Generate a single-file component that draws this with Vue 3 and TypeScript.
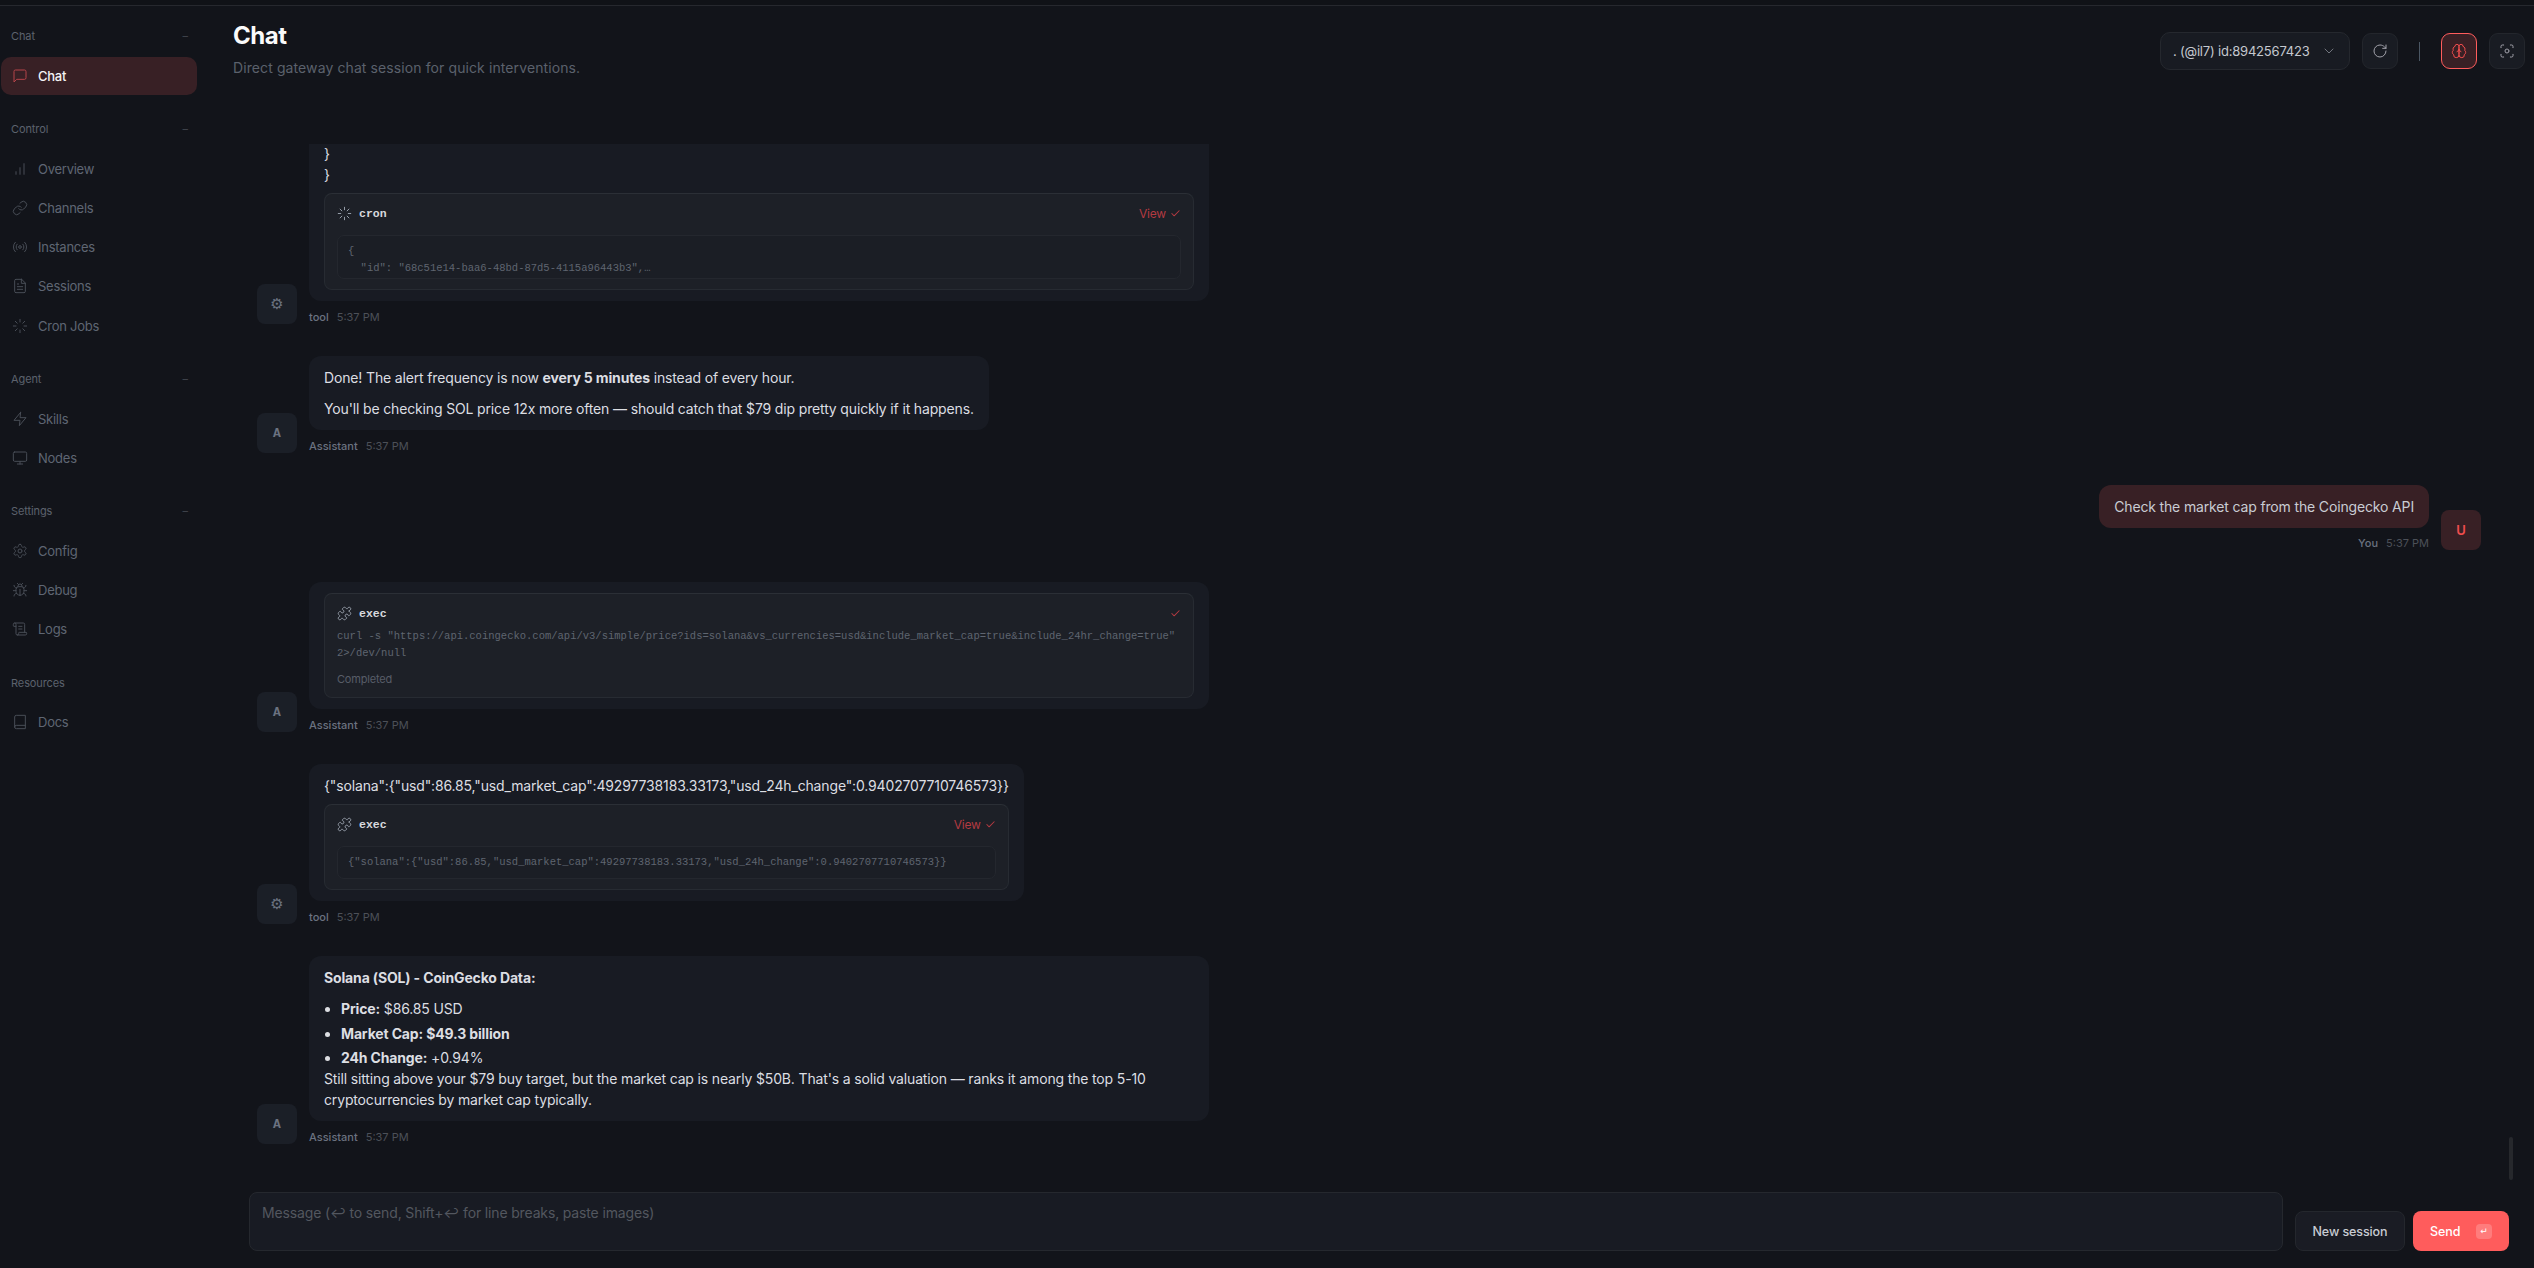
<script setup lang="ts">
import { h } from 'vue'

const icons: Record<string, string[]> = {
  chat: ['M21 15a2 2 0 0 1-2 2H7l-4 4V5a2 2 0 0 1 2-2h14a2 2 0 0 1 2 2z'],
  overview: ['M12 20V10', 'M18 20V4', 'M6 20v-4'],
  channels: [
    'M10 13a5 5 0 0 0 7.54.54l3-3a5 5 0 0 0-7.07-7.07l-1.72 1.71',
    'M14 11a5 5 0 0 0-7.54-.54l-3 3a5 5 0 0 0 7.07 7.07l1.71-1.71',
  ],
  instances: [
    'M14 12a2 2 0 1 1-4 0 2 2 0 1 1 4 0',
    'M4.93 19.07a10 10 0 0 1 0-14.14',
    'M7.76 16.24a6 6 0 0 1 0-8.49',
    'M16.24 7.76a6 6 0 0 1 0 8.49',
    'M19.07 4.93a10 10 0 0 1 0 14.14',
  ],
  sessions: [
    'M14.5 2H6a2 2 0 0 0-2 2v16a2 2 0 0 0 2 2h12a2 2 0 0 0 2-2V7.5L14.5 2z',
    'M14 2v6h6',
    'M16 13H8',
    'M16 17H8',
    'M10 9H8',
  ],
  cron: [
    'M12 2v4',
    'm16.2 7.8 2.9-2.9',
    'M18 12h4',
    'm16.2 16.2 2.9 2.9',
    'M12 18v4',
    'm4.9 19.1 2.9-2.9',
    'M2 12h4',
    'm4.9 4.9 2.9 2.9',
  ],
  skills: ['M13 2 3 14h9l-1 8 10-12h-9l1-8z'],
  nodes: [
    'M4 3h16a2 2 0 0 1 2 2v10a2 2 0 0 1-2 2H4a2 2 0 0 1-2-2V5a2 2 0 0 1 2-2z',
    'M8 21h8',
    'M12 17v4',
  ],
  config: [
    'M12.22 2h-.44a2 2 0 0 0-2 2v.18a2 2 0 0 1-1 1.73l-.43.25a2 2 0 0 1-2 0l-.15-.08a2 2 0 0 0-2.73.73l-.22.38a2 2 0 0 0 .73 2.73l.15.1a2 2 0 0 1 1 1.72v.51a2 2 0 0 1-1 1.74l-.15.09a2 2 0 0 0-.73 2.73l.22.38a2 2 0 0 0 2.73.73l.15-.08a2 2 0 0 1 2 0l.43.25a2 2 0 0 1 1 1.73V20a2 2 0 0 0 2 2h.44a2 2 0 0 0 2-2v-.18a2 2 0 0 1 1-1.73l.43-.25a2 2 0 0 1 2 0l.15.08a2 2 0 0 0 2.73-.73l.22-.39a2 2 0 0 0-.73-2.73l-.15-.08a2 2 0 0 1-1-1.74v-.5a2 2 0 0 1 1-1.74l.15-.09a2 2 0 0 0 .73-2.73l-.22-.38a2 2 0 0 0-2.73-.73l-.15.08a2 2 0 0 1-2 0l-.43-.25a2 2 0 0 1-1-1.73V4a2 2 0 0 0-2-2z',
    'M15 12a3 3 0 1 1-6 0 3 3 0 1 1 6 0',
  ],
  debug: [
    'm8 2 1.88 1.88',
    'M14.12 3.88 16 2',
    'M9 7.13v-1a3.003 3.003 0 1 1 6 0v1',
    'M12 20c-3.3 0-6-2.7-6-6v-3a4 4 0 0 1 4-4h4a4 4 0 0 1 4 4v3c0 3.3-2.7 6-6 6',
    'M12 20v-9',
    'M6.53 9C4.6 8.8 3 7.1 3 5',
    'M6 13H2',
    'M3 21c0-2.1 1.7-3.9 3.8-4',
    'M20.97 5c0 2.1-1.6 3.8-3.5 4',
    'M22 13h-4',
    'M17.2 17c2.1.1 3.8 1.9 3.8 4',
  ],
  logs: [
    'M15 12h-5',
    'M15 8h-5',
    'M19 17V5a2 2 0 0 0-2-2H4',
    'M8 21h12a2 2 0 0 0 2-2v-1a1 1 0 0 0-1-1H11a1 1 0 0 0-1 1v1a2 2 0 1 1-4 0V5a2 2 0 1 0-4 0v2a1 1 0 0 0 1 1h3',
  ],
  docs: ['M4 19.5v-15A2.5 2.5 0 0 1 6.5 2H20v20H6.5a2.5 2.5 0 0 1 0-5H20'],
  exec: [
    'M19.439 7.85c-.049.322.059.648.289.878l1.568 1.568c.47.47.706 1.087.706 1.704s-.235 1.233-.706 1.704l-1.611 1.611a.98.98 0 0 1-.837.276c-.47-.07-.802-.48-.968-.925a2.501 2.501 0 1 0-3.214 3.214c.446.166.855.497.925.968a.979.979 0 0 1-.276.837l-1.61 1.61a2.404 2.404 0 0 1-1.705.707 2.402 2.402 0 0 1-1.704-.706l-1.568-1.568a1.026 1.026 0 0 0-.877-.29c-.493.074-.84.504-1.02.968a2.5 2.5 0 1 1-3.237-3.237c.464-.18.894-.527.967-1.02a1.026 1.026 0 0 0-.289-.877l-1.568-1.568A2.402 2.402 0 0 1 1.998 12c0-.617.236-1.234.706-1.704L4.23 8.77c.24-.24.581-.353.917-.303.515.077.877.528 1.073 1.01a2.5 2.5 0 1 0 3.259-3.259c-.482-.196-.933-.558-1.01-1.073-.05-.336.062-.676.303-.917l1.525-1.525A2.402 2.402 0 0 1 12 1.998c.617 0 1.234.236 1.704.706l1.568 1.568c.23.23.556.338.877.29.493-.074.84-.504 1.02-.968a2.5 2.5 0 1 1 3.237 3.237c-.464.18-.894.527-.967 1.02Z',
  ],
  refresh: ['M21 12a9 9 0 1 1-9-9c2.52 0 4.93 1 6.74 2.74L21 8', 'M21 3v5h-5'],
  brain: [
    'M12 5a3 3 0 1 0-5.997.125 4 4 0 0 0-2.526 5.77 4 4 0 0 0 .556 6.588A4 4 0 1 0 12 18Z',
    'M12 5a3 3 0 1 1 5.997.125 4 4 0 0 1 2.526 5.77 4 4 0 0 1-.556 6.588A4 4 0 1 1 12 18Z',
    'M15 13a4.5 4.5 0 0 1-3-4 4.5 4.5 0 0 1-3 4',
  ],
  focus: [
    'M3 7V5a2 2 0 0 1 2-2h2',
    'M17 3h2a2 2 0 0 1 2 2v2',
    'M21 17v2a2 2 0 0 1-2 2h-2',
    'M7 21H5a2 2 0 0 1-2-2v-2',
    'M15 12a3 3 0 1 1-6 0 3 3 0 1 1 6 0',
  ],
  chevron: ['m6 9 6 6 6-6'],
  check: ['M20 6 9 17l-5-5'],
}

const Icon = (props: { name: string }) =>
  h(
    'svg',
    {
      viewBox: '0 0 24 24',
      fill: 'none',
      stroke: 'currentColor',
      'stroke-width': 1.5,
      'stroke-linecap': 'round',
      'stroke-linejoin': 'round',
    },
    icons[props.name].map((d) => h('path', { d })),
  )

const navGroups = [
  { label: 'Chat', items: [{ name: 'Chat', icon: 'chat', active: true }] },
  {
    label: 'Control',
    items: [
      { name: 'Overview', icon: 'overview' },
      { name: 'Channels', icon: 'channels' },
      { name: 'Instances', icon: 'instances' },
      { name: 'Sessions', icon: 'sessions' },
      { name: 'Cron Jobs', icon: 'cron' },
    ],
  },
  {
    label: 'Agent',
    items: [
      { name: 'Skills', icon: 'skills' },
      { name: 'Nodes', icon: 'nodes' },
    ],
  },
  {
    label: 'Settings',
    items: [
      { name: 'Config', icon: 'config' },
      { name: 'Debug', icon: 'debug' },
      { name: 'Logs', icon: 'logs' },
    ],
  },
  { label: 'Resources', plain: true, items: [{ name: 'Docs', icon: 'docs' }] },
]

const curl =
  'curl -s "https://api.coingecko.com/api/v3/simple/price?ids=solana&vs_currencies=usd&include_market_cap=true&include_24hr_change=true" 2>/dev/null'
const solanaJson =
  '{"solana":{"usd":86.85,"usd_market_cap":49297738183.33173,"usd_24h_change":0.9402707710746573}}'
</script>

<template>
  <div class="shell">
    <div class="topbar"></div>
    <div class="body">
      <aside class="sidebar">
        <section v-for="group in navGroups" :key="group.label" class="nav-group">
          <div class="nav-label">
            <span>{{ group.label }}</span>
            <span v-if="!group.plain" class="nav-dash">–</span>
          </div>
          <a
            v-for="item in group.items"
            :key="item.name"
            class="nav-item"
            :class="{ 'nav-item--active': 'active' in item }"
          >
            <Icon :name="item.icon" class="nav-icon" />
            <span>{{ item.name }}</span>
          </a>
        </section>
      </aside>

      <main class="main">
        <header class="page-header">
          <div>
            <h1>Chat</h1>
            <p>Direct gateway chat session for quick interventions.</p>
          </div>
          <div class="actions">
            <div class="session-select">
              <span>. (@il7) id:8942567423</span>
              <Icon name="chevron" class="select-chevron" />
            </div>
            <button class="icon-btn"><Icon name="refresh" /></button>
            <span class="divider"></span>
            <button class="icon-btn icon-btn--on"><Icon name="brain" /></button>
            <button class="icon-btn"><Icon name="focus" /></button>
          </div>
        </header>

        <div class="thread-wrap">
          <div class="thread">
            <div class="msg">
              <div class="avatar avatar--tool">⚙</div>
              <div class="msg-body">
                <div class="bubble bubble--wide bubble--clipped">
                  <div>}</div>
                  <div>}</div>
                  <div class="tool-card">
                    <div class="tool-head">
                      <span class="tool-name"><Icon name="cron" />cron</span>
                      <span class="tool-view">View <Icon name="check" /></span>
                    </div>
                    <pre class="tool-preview tool-preview--cut">{
  "id": "68c51e14-baa6-48bd-87d5-4115a96443b3",…</pre>
                  </div>
                </div>
                <div class="msg-meta"><b>tool</b><span>5:37 PM</span></div>
              </div>
            </div>

            <div class="msg">
              <div class="avatar">A</div>
              <div class="msg-body">
                <div class="bubble">
                  <p>Done! The alert frequency is now <strong>every 5 minutes</strong> instead of every hour.</p>
                  <p>You'll be checking SOL price 12x more often — should catch that $79 dip pretty quickly if it happens.</p>
                </div>
                <div class="msg-meta"><b>Assistant</b><span>5:37 PM</span></div>
              </div>
            </div>

            <div class="msg msg--user">
              <div class="msg-body">
                <div class="bubble bubble--user">Check the market cap from the Coingecko API</div>
                <div class="msg-meta"><b>You</b><span>5:37 PM</span></div>
              </div>
              <div class="avatar avatar--user">U</div>
            </div>

            <div class="msg">
              <div class="avatar">A</div>
              <div class="msg-body">
                <div class="bubble bubble--wide">
                  <div class="tool-card tool-card--flush">
                    <div class="tool-head">
                      <span class="tool-name"><Icon name="exec" />exec</span>
                      <span class="tool-view"><Icon name="check" /></span>
                    </div>
                    <div class="tool-detail">{{ curl }}</div>
                    <div class="tool-status">Completed</div>
                  </div>
                </div>
                <div class="msg-meta"><b>Assistant</b><span>5:37 PM</span></div>
              </div>
            </div>

            <div class="msg">
              <div class="avatar avatar--tool">⚙</div>
              <div class="msg-body">
                <div class="bubble">
                  <div>{{ solanaJson }}</div>
                  <div class="tool-card">
                    <div class="tool-head">
                      <span class="tool-name"><Icon name="exec" />exec</span>
                      <span class="tool-view">View <Icon name="check" /></span>
                    </div>
                    <pre class="tool-preview">{{ solanaJson }}</pre>
                  </div>
                </div>
                <div class="msg-meta"><b>tool</b><span>5:37 PM</span></div>
              </div>
            </div>

            <div class="msg">
              <div class="avatar">A</div>
              <div class="msg-body">
                <div class="bubble bubble--wide">
                  <p><strong>Solana (SOL) - CoinGecko Data:</strong></p>
                  <ul>
                    <li><strong>Price:</strong> $86.85 USD</li>
                    <li><strong>Market Cap: $49.3 billion</strong></li>
                    <li><strong>24h Change:</strong> +0.94%</li>
                  </ul>
                  <div>Still sitting above your $79 buy target, but the market cap is nearly $50B. That's a solid valuation — ranks it among the top 5-10 cryptocurrencies by market cap typically.</div>
                </div>
                <div class="msg-meta"><b>Assistant</b><span>5:37 PM</span></div>
              </div>
            </div>
          </div>
          <div class="scroll-thumb"></div>
        </div>

        <div class="composer">
          <div class="composer-input">Message (↩ to send, Shift+↩ for line breaks, paste images)</div>
          <button class="btn">New session</button>
          <button class="btn btn--send">Send <kbd>↵</kbd></button>
        </div>
      </main>
    </div>
  </div>
</template>

<style>
body {
  background: #12141a;
}
</style>

<style scoped>
.shell {
  width: 2534px;
  height: 1268px;
  display: flex;
  flex-direction: column;
  background: #12141a;
  color: #e4e4e7;
  font-family: Inter, "Noto Sans", sans-serif;
  font-size: 13px;
  overflow: hidden;
}

.topbar {
  height: 5px;
  flex: none;
  border-bottom: 1px solid #26282e;
  background: #101217;
}

.body {
  flex: 1;
  min-height: 0;
  display: flex;
}

.sidebar {
  width: 233px;
  flex: none;
  padding: 22px 36px 0 1px;
  box-sizing: border-box;
}

.nav-group {
  display: flex;
  flex-direction: column;
  gap: 1.25px;
  margin-bottom: 26.5px;
}

.nav-label {
  height: 16px;
  margin-bottom: 11.25px;
  padding: 0 9px 0 10px;
  display: flex;
  justify-content: space-between;
  align-items: center;
  font-size: 11px;
  letter-spacing: -0.1px;
  color: #5c626d;
}

.nav-dash {
  color: #3f434b;
}

.nav-item {
  height: 38px;
  padding-left: 11px;
  display: flex;
  align-items: center;
  gap: 10px;
  border-radius: 10px;
  color: #5f6673;
  letter-spacing: -0.25px;
}

.nav-icon {
  width: 16px;
  height: 16px;
  color: #484d56;
}

.nav-item--active {
  background: #382025;
  color: #f4f4f5;
  font-weight: 500;
}

.nav-item--active .nav-icon {
  color: #b5444a;
}

.main {
  flex: 1;
  min-width: 0;
  display: flex;
  flex-direction: column;
  padding-right: 9px;
}

.page-header {
  height: 138px;
  flex: none;
  display: flex;
  justify-content: space-between;
  align-items: flex-start;
  padding-top: 15px;
  box-sizing: border-box;
}

.page-header h1 {
  margin: 0 0 8px;
  font-size: 24px;
  line-height: 30px;
  font-weight: 700;
  letter-spacing: -0.5px;
  color: #fafafa;
}

.page-header p {
  margin: 0;
  font-size: 14px;
  line-height: 18px;
  letter-spacing: 0.1px;
  color: #5b616c;
}

.actions {
  display: flex;
  align-items: center;
  margin-top: 11px;
}

.session-select {
  width: 190px;
  height: 38px;
  box-sizing: border-box;
  padding: 0 12px 0 12px;
  display: flex;
  justify-content: space-between;
  align-items: center;
  border: 1px solid #25282e;
  border-radius: 10px;
  background: #181b22;
  color: #c4c8cf;
  letter-spacing: -0.2px;
  margin-right: 12px;
}

.select-chevron {
  width: 16px;
  height: 16px;
  color: #71757d;
}

.icon-btn {
  width: 36px;
  height: 36px;
  padding: 0;
  display: flex;
  align-items: center;
  justify-content: center;
  border: 1px solid #23262c;
  border-radius: 9px;
  background: #191c23;
  color: #a1a1aa;
}

.icon-btn svg {
  width: 16px;
  height: 16px;
}

.icon-btn--on {
  border-color: #ff5c5c;
  background: #382025;
  color: #ef4d4d;
  margin-right: 12px;
}

.divider {
  width: 1px;
  height: 19px;
  margin: 0 21px;
  background: #4a5663;
}

.thread-wrap {
  position: relative;
  flex: 1;
  min-height: 0;
  margin: 0 16px;
}

.thread {
  height: 100%;
  box-sizing: border-box;
  padding: 0 28px 36px 8px;
  display: flex;
  flex-direction: column;
  justify-content: flex-end;
  gap: 32px;
  overflow: hidden;
}

.msg {
  display: flex;
  align-items: flex-end;
  gap: 12px;
  flex: none;
}

.msg--user {
  justify-content: flex-end;
}

.msg--user .msg-body {
  align-items: flex-end;
}

.msg--user .msg-meta {
  margin-top: 7px;
}

.msg-body {
  display: flex;
  flex-direction: column;
  max-width: 900px;
}

.avatar {
  width: 40px;
  height: 40px;
  flex: none;
  display: flex;
  align-items: center;
  justify-content: center;
  border-radius: 8px;
  background: #1b1f27;
  color: #6b7280;
  font-weight: 600;
  font-size: 13px;
  font-family: "Liberation Mono", monospace;
}

.avatar--tool {
  font-family: "DejaVu Sans", sans-serif;
  font-size: 15px;
}

.avatar--user {
  background: #382025;
  color: #ef4d4d;
  font-family: Inter, sans-serif;
}

.bubble {
  padding: 11px 15px;
  border-radius: 12px;
  background: #181b23;
  font-size: 14px;
  line-height: 21px;
  letter-spacing: -0.15px;
  color: #dcdee2;
}

.bubble--wide {
  width: 900px;
  box-sizing: border-box;
}

.bubble--clipped {
  padding-top: 30px;
}

.bubble--user {
  background: #382025;
  color: #c9ccd3;
}

.bubble p {
  margin: 0 0 10px;
}

.bubble p:last-child {
  margin-bottom: 0;
}

.bubble ul {
  margin: 0;
  padding-left: 17px;
}

.bubble li + li {
  margin-top: 3.5px;
}

.bubble strong {
  font-weight: 700;
}

.msg-meta {
  margin-top: 8px;
  height: 15px;
  display: flex;
  align-items: center;
  gap: 8px;
  font-size: 11px;
  color: #4c5058;
}

.msg-meta b {
  font-weight: 500;
  color: #6b7280;
}

.tool-card {
  margin-top: 8px;
  padding: 10px 12px 10px;
  border: 1px solid #272b32;
  border-top-color: #2b2f36;
  border-radius: 8px;
  background: #1d2027;
}

.tool-card--flush {
  margin-top: 0;
}

.tool-head {
  height: 18px;
  display: flex;
  justify-content: space-between;
  align-items: center;
  font-size: 12px;
}

.tool-name {
  display: flex;
  align-items: center;
  gap: 7px;
  font-weight: 600;
  color: #d8d9dd;
  letter-spacing: 0;
  font-family: "Liberation Mono", Inter, monospace;
  font-size: 11.5px;
}

.tool-name svg {
  width: 15px;
  height: 15px;
  color: #9ca3af;
}

.tool-view {
  display: flex;
  align-items: center;
  gap: 4px;
  font-size: 12px;
  letter-spacing: -0.2px;
  color: #b33a41;
}

.tool-view svg {
  width: 11px;
  height: 11px;
  stroke-width: 2.2;
}

.tool-preview {
  margin: 13px 0 0;
  padding: 7px 10px;
  max-height: 44px;
  overflow: hidden;
  box-sizing: border-box;
  border: 1px solid #24272e;
  border-radius: 7px;
  background: #1b1e25;
  font-family: "Liberation Mono", monospace;
  font-size: 10.5px;
  line-height: 17px;
  letter-spacing: 0;
  color: #5f6570;
}

.tool-preview--cut {
  height: 44px;
}

.tool-detail {
  margin-top: 6px;
  font-family: "Liberation Mono", monospace;
  font-size: 10.5px;
  line-height: 17px;
  letter-spacing: 0;
  color: #5f6570;
}

.tool-status {
  margin-top: 9px;
  font-size: 11px;
  line-height: 16px;
  letter-spacing: -0.2px;
  color: #585d67;
}

.scroll-thumb {
  position: absolute;
  right: -4px;
  bottom: 0;
  width: 4px;
  height: 43px;
  border-radius: 2px;
  background: #26282c;
}

.composer {
  flex: none;
  margin: 12px 16px 17px;
  display: flex;
  align-items: flex-end;
  gap: 8px;
}

.composer-input {
  flex: 1;
  height: 59px;
  box-sizing: border-box;
  margin-right: 4px;
  padding: 10px 12px;
  border: 1px solid #25282e;
  border-radius: 8px;
  background: #181b23;
  font-size: 14px;
  line-height: 20px;
  letter-spacing: -0.15px;
  color: #53575f;
}

.btn {
  height: 40px;
  box-sizing: border-box;
  width: 110px;
  border: 1px solid #24272d;
  border-radius: 8px;
  background: #1a1c24;
  color: #c9ccd3;
  font-family: inherit;
  font-size: 12.5px;
  font-weight: 500;
  letter-spacing: -0.1px;
}

.btn--send {
  width: 96px;
  border: none;
  display: flex;
  align-items: center;
  justify-content: space-between;
  padding: 0 17px;
  background: #ff5c5c;
  color: #fff;
}

.btn--send kbd {
  width: 16px;
  height: 15px;
  display: flex;
  align-items: center;
  justify-content: center;
  border-radius: 4px;
  background: rgba(255, 255, 255, 0.2);
  font-family: "DejaVu Sans", sans-serif;
  font-size: 9px;
  color: #fff;
}
</style>
